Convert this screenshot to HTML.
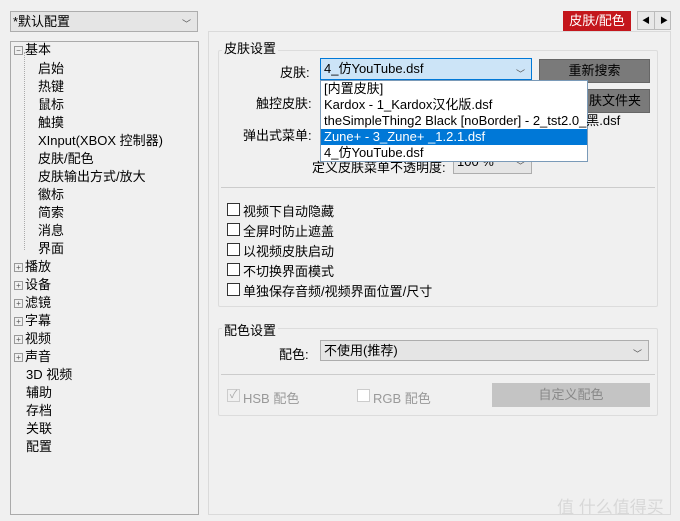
<!DOCTYPE html>
<html><head><meta charset="utf-8"><style>
*{margin:0;padding:0;box-sizing:border-box}
body{width:680px;height:521px;background:#f0f0f0;font-family:"Liberation Sans","Noto Sans CJK SC",sans-serif;font-size:13px;color:#000;position:relative;overflow:hidden}
.a{position:absolute;white-space:nowrap}
.combo{background:#e5e5e5;border:1px solid #adadad}
.chev{position:absolute;right:6px;top:4px;font-size:9px;color:#555}
.tree div{position:absolute;white-space:nowrap;line-height:18px}
.btn{background:#7a7a7a;border:1px solid #666;text-align:center;color:#000}
.cb{position:absolute;width:13px;height:13px;border:1px solid #333;background:#fff}
.grp{position:absolute;border:1px solid #dcdcdc;border-radius:2px}
.plus{display:inline-block;width:9px;height:9px;border:1px solid #999;font-size:8px;line-height:7px;text-align:center;color:#555;vertical-align:1px;margin-right:2px}
</style></head><body>
<div class="a combo" style="left:10px;top:11px;width:188px;height:21px;padding:1px 2px;line-height:17px">*默认配置<span class="chev">﹀</span></div>
<div class="a" style="left:10px;top:41px;width:189px;height:474px;border:1px solid #aaa;background:#f0f0f0"></div>
<div class="tree">
<div style="left:14px;top:41px"><span class="plus">−</span>基本</div>
<div style="left:24px;top:52px;width:1px;height:198px;border-left:1px dotted #aaa"></div>
<div style="left:38px;top:60px">启始</div>
<div style="left:38px;top:78px">热键</div>
<div style="left:38px;top:96px">鼠标</div>
<div style="left:38px;top:114px">触摸</div>
<div style="left:38px;top:132px">XInput(XBOX 控制器)</div>
<div style="left:38px;top:150px">皮肤/配色</div>
<div style="left:38px;top:168px">皮肤输出方式/放大</div>
<div style="left:38px;top:186px">徽标</div>
<div style="left:38px;top:204px">简索</div>
<div style="left:38px;top:222px">消息</div>
<div style="left:38px;top:240px">界面</div>
<div style="left:14px;top:258px"><span class="plus">+</span>播放</div>
<div style="left:14px;top:276px"><span class="plus">+</span>设备</div>
<div style="left:14px;top:294px"><span class="plus">+</span>滤镜</div>
<div style="left:14px;top:312px"><span class="plus">+</span>字幕</div>
<div style="left:14px;top:330px"><span class="plus">+</span>视频</div>
<div style="left:14px;top:348px"><span class="plus">+</span>声音</div>
<div style="left:26px;top:366px">3D 视频</div>
<div style="left:26px;top:384px">辅助</div>
<div style="left:26px;top:402px">存档</div>
<div style="left:26px;top:420px">关联</div>
<div style="left:26px;top:438px">配置</div>
</div>
<div class="a" style="left:563px;top:11px;width:68px;height:20px;background:#c4161c;color:#fff;text-align:center;line-height:20px">皮肤/配色</div>
<div class="a" style="left:637px;top:11px;width:34px;height:19px;border:1px solid #bbb;background:#e8e8e8;font-size:8px;line-height:17px"><span style="position:absolute;left:4px">◀</span><span style="position:absolute;left:16px;top:0;height:17px;border-left:1px solid #bbb"></span><span style="position:absolute;left:22px">▶</span></div>
<div class="a" style="left:208px;top:31px;width:463px;height:484px;border:1px solid #dadada"></div>
<div class="grp" style="left:218px;top:50px;width:440px;height:257px"></div>
<div class="a" style="left:222px;top:38px;background:#f0f0f0;padding:0 2px">皮肤设置</div>
<div class="a" style="left:280px;top:62px">皮肤:</div>
<div class="a" style="left:256px;top:93px">触控皮肤:</div>
<div class="a" style="left:243px;top:125px">弹出式菜单:</div>
<div class="a" style="left:312px;top:157px">定义皮肤菜单不透明度:</div>
<div class="a combo" style="left:453px;top:154px;width:79px;height:20px;padding-left:3px;line-height:14px">100 %<span class="chev">﹀</span></div>
<div class="a" style="left:320px;top:58px;width:212px;height:22px;border:1px solid #0078d7;background:#cce4f7;padding-left:3px;line-height:20px">4_仿YouTube.dsf<span class="chev" style="top:5px">﹀</span></div>
<div class="a btn" style="left:539px;top:59px;width:111px;height:24px;line-height:22px">重新搜索</div>
<div class="a btn" style="left:580px;top:89px;width:70px;height:24px;line-height:22px">肤文件夹</div>
<div class="a" style="left:320px;top:80px;width:268px;height:82px;border:1px solid #7a9ab8;background:#fff;line-height:16px">
<div style="padding-left:3px">[内置皮肤]</div>
<div style="padding-left:3px">Kardox - 1_Kardox汉化版.dsf</div>
<div style="padding-left:3px">theSimpleThing2 Black [noBorder] - 2_tst2.0_黑.dsf</div>
<div style="padding-left:3px;background:#0078d7;color:#fff">Zune+ - 3_Zune+ _1.2.1.dsf</div>
<div style="padding-left:3px">4_仿YouTube.dsf</div>
</div>
<div class="a" style="left:221px;top:187px;width:434px;border-top:1px solid #ccc"></div>
<div class="cb" style="left:227px;top:203px"></div><div class="a" style="left:243px;top:201px">视频下自动隐藏</div>
<div class="cb" style="left:227px;top:223px"></div><div class="a" style="left:243px;top:221px">全屏时防止遮盖</div>
<div class="cb" style="left:227px;top:243px"></div><div class="a" style="left:243px;top:241px">以视频皮肤启动</div>
<div class="cb" style="left:227px;top:263px"></div><div class="a" style="left:243px;top:261px">不切换界面模式</div>
<div class="cb" style="left:227px;top:283px"></div><div class="a" style="left:243px;top:281px">单独保存音频/视频界面位置/尺寸</div>
<div class="grp" style="left:218px;top:328px;width:440px;height:88px"></div>
<div class="a" style="left:222px;top:320px;background:#f0f0f0;padding:0 2px">配色设置</div>
<div class="a" style="left:279px;top:344px">配色:</div>
<div class="a combo" style="left:320px;top:340px;width:329px;height:21px;padding-left:3px;line-height:19px">不使用(推荐)<span class="chev">﹀</span></div>
<div class="a" style="left:221px;top:374px;width:434px;border-top:1px solid #ccc"></div>
<div class="cb" style="left:227px;top:389px;border-color:#ccc;background:#f0f0f0;color:#aaa;font-size:11px;line-height:11px;text-align:center">✓</div><div class="a" style="left:243px;top:388px;color:#999">HSB 配色</div>
<div class="cb" style="left:357px;top:389px;border-color:#ccc"></div><div class="a" style="left:373px;top:388px;color:#999">RGB 配色</div>
<div class="a" style="left:492px;top:383px;width:158px;height:24px;background:#c4c4c4;color:#888;text-align:center;line-height:23px">自定义配色</div>
<div class="a" style="left:557px;top:493px;color:#d8d8d8;font-size:17px">值 什么值得买</div>
</body></html>
